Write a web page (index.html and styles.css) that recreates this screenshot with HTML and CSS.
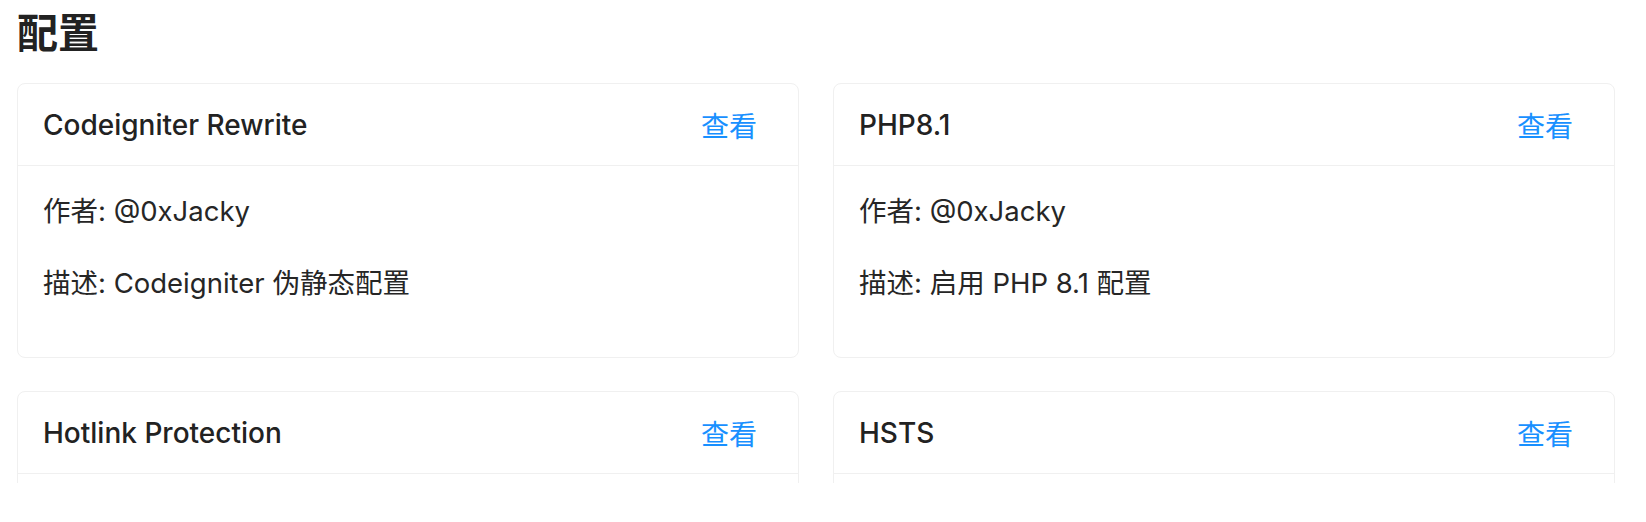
FILE: index.html
```html
<!DOCTYPE html>
<html lang="zh-CN">
<head>
<meta charset="utf-8">
<title>配置</title>
<link rel="stylesheet" href="styles.css">
</head>
<body>
<main class="page">
  <h1 class="page-title">配置</h1>
  <div class="grid">
    <section class="card">
      <header class="card-head">
        <span class="card-title">Codeigniter Rewrite</span>
        <a class="card-link" href="#">查看</a>
      </header>
      <div class="card-body">
        <p>作者: @0xJacky</p>
        <p>描述: Codeigniter 伪静态配置</p>
      </div>
    </section>
    <section class="card">
      <header class="card-head">
        <span class="card-title">PHP8.1</span>
        <a class="card-link" href="#">查看</a>
      </header>
      <div class="card-body">
        <p>作者: @0xJacky</p>
        <p>描述: 启用 PHP 8.1 配置</p>
      </div>
    </section>
    <section class="card">
      <header class="card-head">
        <span class="card-title">Hotlink Protection</span>
        <a class="card-link" href="#">查看</a>
      </header>
      <div class="card-body card-body-empty"></div>
    </section>
    <section class="card">
      <header class="card-head">
        <span class="card-title">HSTS</span>
        <a class="card-link" href="#">查看</a>
      </header>
      <div class="card-body card-body-empty"></div>
    </section>
  </div>
</main>
</body>
</html>
```

FILE: styles.css
```css
html, body {
  margin: 0;
  padding: 0;
  background: #ffffff;
}

body {
  font-family: "Inter", "Noto Sans CJK SC", sans-serif;
  color: #262626;
}

.page {
  height: 483px;
  overflow: hidden;
  padding: 2px 31px 0 17px;
  box-sizing: border-box;
}

.page-title {
  margin: 0 0 25px 0;
  font-family: "Noto Sans CJK SC", sans-serif;
  font-size: 41px;
  line-height: 56px;
  font-weight: 700;
  color: #222222;
}

.grid {
  display: grid;
  grid-template-columns: 1fr 1fr;
  column-gap: 34px;
  row-gap: 33px;
}

.card {
  border: 1px solid #f0f0f0;
  border-radius: 8px;
  background: #ffffff;
}

.card-head {
  display: flex;
  align-items: center;
  justify-content: space-between;
  height: 81px;
  padding: 0 41px 0 25px;
  border-bottom: 1px solid #f0f0f0;
}

.card-title {
  font-size: 28px;
  font-weight: 500;
  color: #222222;
}

.card-link {
  font-size: 28px;
  color: #1890ff;
  text-decoration: none;
}

.card-body {
  padding: 23px 25px 24px 25px;
  font-size: 27.5px;
  line-height: 44px;
}

.card-body-empty {
  height: 144px;
}

.card-body p {
  margin: 0 0 28px 0;
}
```
